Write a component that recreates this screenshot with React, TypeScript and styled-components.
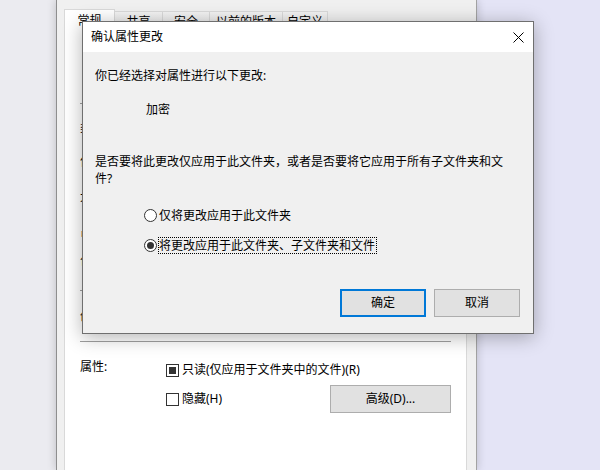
import React from "react";
import styled, { createGlobalStyle } from "styled-components";

const GlobalStyle = createGlobalStyle`
  html, body { margin: 0; padding: 0; }
  body {
    width: 600px;
    height: 470px;
    overflow: hidden;
    font-family: "Noto Sans", "Noto Sans CJK SC", sans-serif;
    font-size: 12px;
    color: #000;
  }
  * { box-sizing: border-box; }
`;

const Desktop = styled.div`
  position: relative;
  width: 600px;
  height: 470px;
  overflow: hidden;
  display: flex;
  background: #e4e4f6;
`;

const Backdrop = styled.div`
  width: 56px;
  flex: none;
  background: #ebebf0;
`;

const Window = styled.div`
  position: relative;
  width: 421px;
  flex: none;
  border-left: 1px solid #8e8e8e;
  border-right: 1px solid #a2a2a2;
  background: #f0f0f0;
  padding: 0 9px 0 7px;
  display: flex;
  flex-direction: column;
  box-shadow: 0 0 9px rgba(0, 0, 0, 0.2);
`;

const TabStrip = styled.div`
  display: flex;
  align-items: flex-end;
  height: 31px;
  flex: none;
`;

const Tab = styled.div<{ $w: number; $active?: boolean }>`
  width: ${(p) => p.$w}px;
  height: ${(p) => (p.$active ? 22 : 19)}px;
  margin-bottom: ${(p) => (p.$active ? 0 : 1)}px;
  border: 1px solid #d9d9d9;
  border-bottom: none;
  background: ${(p) => (p.$active ? "#fff" : "linear-gradient(#f3f3f3, #e6e6e6)")};
  position: relative;
  z-index: ${(p) => (p.$active ? 1 : 0)};
  display: flex;
  justify-content: center;
  align-items: center;
  padding-top: 1px;
  line-height: 18px;
  white-space: nowrap;
  & + & { margin-left: -1px; }
`;

const TabPage = styled.div`
  flex: 1;
  margin-top: -1px;
  background: #fff;
  border: 1px solid #d9d9d9;
  border-bottom: none;
  padding: 0 15px;
  display: flex;
  flex-direction: column;
`;

const TopArea = styled.div`
  height: 72px;
  flex: none;
  display: flex;
  align-items: center;
  gap: 22px;
  padding-left: 6px;
`;

const NameInput = styled.div`
  flex: 1;
  height: 23px;
  border: 1px solid #7a7a7a;
`;

const Separator = styled.div<{ $mt: number }>`
  height: 1px;
  flex: none;
  margin-top: ${(p) => p.$mt}px;
  background: #a0a0a0;
`;

const InfoRow = styled.div<{ $mt: number }>`
  display: flex;
  margin-top: ${(p) => p.$mt}px;
  line-height: 18px;
  height: 18px;
  white-space: nowrap;
`;

const InfoLabel = styled.div`
  width: 86px;
  flex: none;
`;

const AttrSection = styled.div`
  display: flex;
  margin-top: 16px;
`;

const AttrLabel = styled.div`
  width: 86px;
  flex: none;
  line-height: 18px;
`;

const AttrOptions = styled.div`
  flex: 1;
  display: flex;
  flex-direction: column;
  padding-top: 3px;
`;

const AttrRow = styled.div<{ $h: number; $mt?: number }>`
  display: flex;
  align-items: center;
  justify-content: space-between;
  height: ${(p) => p.$h}px;
  margin-top: ${(p) => p.$mt ?? 0}px;
`;

const CheckItem = styled.div`
  display: flex;
  align-items: center;
  gap: 3px;
  line-height: 18px;
  white-space: nowrap;
`;

const CheckBox = styled.span<{ $mixed?: boolean }>`
  width: 13px;
  height: 13px;
  flex: none;
  border: 1px solid #333;
  background: #fff;
  display: flex;
  align-items: center;
  justify-content: center;
  &::after {
    content: "";
    width: 7px;
    height: 7px;
    background: ${(p) => (p.$mixed ? "#333" : "transparent")};
  }
`;

const Button = styled.button<{ $w: number; $primary?: boolean }>`
  width: ${(p) => p.$w}px;
  height: 28px;
  flex: none;
  margin: 0;
  padding: 0;
  font-family: inherit;
  font-size: 12px;
  color: #000;
  background: #e1e1e1;
  border: ${(p) => (p.$primary ? "2px solid #0078d7" : "1px solid #adadad")};
  border-radius: 0;
  line-height: 18px;
`;

/* ---------- dialog ---------- */

const Dialog = styled.div`
  position: absolute;
  left: 82px;
  top: 21px;
  width: 452px;
  height: 313px;
  border: 1px solid #6f6f6f;
  background: #f0f0f0;
  box-shadow: 0 3px 18px rgba(0, 0, 0, 0.3);
  display: flex;
  flex-direction: column;
  z-index: 5;
`;

const TitleBar = styled.div`
  height: 30px;
  flex: none;
  background: #fff;
  display: flex;
  align-items: center;
  justify-content: space-between;
  padding-left: 8px;
  line-height: 18px;
`;

const CloseButton = styled.div`
  width: 30px;
  height: 30px;
  display: flex;
  align-items: center;
  justify-content: center;
`;

const DialogBody = styled.div`
  flex: 1;
  display: flex;
  flex-direction: column;
  padding: 15px 13px 16px 12px;
`;

const Line = styled.div<{ $mt?: number; $indent?: number; $lh?: number }>`
  margin-top: ${(p) => p.$mt ?? 0}px;
  margin-left: ${(p) => p.$indent ?? 0}px;
  line-height: ${(p) => p.$lh ?? 18}px;
  white-space: nowrap;
`;

const RadioGroup = styled.div`
  display: flex;
  flex-direction: column;
  gap: 12px;
  margin-top: 19px;
  margin-left: 49px;
`;

const RadioRow = styled.div`
  display: flex;
  align-items: center;
  height: 18px;
  gap: 1px;
`;

const RadioCircle = styled.span<{ $checked?: boolean }>`
  width: 13px;
  height: 13px;
  flex: none;
  border: 1px solid #333;
  border-radius: 50%;
  background: #fff;
  display: flex;
  align-items: center;
  justify-content: center;
  &::after {
    content: "";
    width: 7px;
    height: 7px;
    border-radius: 50%;
    background: ${(p) => (p.$checked ? "#333" : "transparent")};
  }
`;

const RadioLabel = styled.span<{ $focused?: boolean }>`
  border: 1px ${(p) => (p.$focused ? "dotted #000" : "solid transparent")};
  line-height: 15px;
  padding: 0 1px 0 0;
  white-space: nowrap;
`;

const ButtonRow = styled.div`
  margin-top: auto;
  display: flex;
  justify-content: flex-end;
  gap: 8px;
`;

const FolderIcon = () => (
  <svg width="32" height="28" viewBox="0 0 32 28">
    <path d="M1 3h11l3 3h16v20H1z" fill="#e8b84a" />
    <path d="M1 8h30v18H1z" fill="#f8d775" />
  </svg>
);

const CloseIcon = () => (
  <svg width="11" height="11" viewBox="0 0 11 11">
    <path d="M0.5 0.5L10.5 10.5M10.5 0.5L0.5 10.5" stroke="#000" strokeWidth="1" fill="none" />
  </svg>
);

const tabs = [
  { label: "常规", w: 51, active: true },
  { label: "共享", w: 49 },
  { label: "安全", w: 48 },
  { label: "以前的版本", w: 74 },
  { label: "自定义", w: 46 },
];

const infoRows: { label: string; mt: number; sepBefore?: number }[] = [
  { label: "类型:", mt: 15 },
  { label: "位置:", mt: 16 },
  { label: "大小:", mt: 17 },
  { label: "占用空间:", mt: 17 },
  { label: "包含:", mt: 12 },
];

export default function App() {
  return (
    <>
      <GlobalStyle />
      <Desktop>
        <Backdrop />
        <Window>
          <TabStrip>
            {tabs.map((t) => (
              <Tab key={t.label} $w={t.w} $active={t.active}>
                {t.label}
              </Tab>
            ))}
          </TabStrip>
          <TabPage>
            <TopArea>
              <FolderIcon />
              <NameInput />
            </TopArea>
            <Separator $mt={0} />
            {infoRows.map((r) => (
              <InfoRow key={r.label} $mt={r.mt}>
                <InfoLabel>{r.label}</InfoLabel>
              </InfoRow>
            ))}
            <Separator $mt={19} />
            <InfoRow $mt={17}>
              <InfoLabel>创建时间:</InfoLabel>
            </InfoRow>
            <Separator $mt={15} />
            <AttrSection>
              <AttrLabel>属性:</AttrLabel>
              <AttrOptions>
                <AttrRow $h={18}>
                  <CheckItem>
                    <CheckBox $mixed />
                    只读(仅应用于文件夹中的文件)(R)
                  </CheckItem>
                </AttrRow>
                <AttrRow $h={28} $mt={6}>
                  <CheckItem>
                    <CheckBox />
                    隐藏(H)
                  </CheckItem>
                  <Button $w={121}>高级(D)...</Button>
                </AttrRow>
              </AttrOptions>
            </AttrSection>
          </TabPage>
        </Window>

        <Dialog>
          <TitleBar>
            <span>确认属性更改</span>
            <CloseButton>
              <CloseIcon />
            </CloseButton>
          </TitleBar>
          <DialogBody>
            <Line>你已经选择对属性进行以下更改:</Line>
            <Line $mt={16} $indent={51}>
              加密
            </Line>
            <Line $mt={34} $lh={17}>
              是否要将此更改仅应用于此文件夹，或者是否要将它应用于所有子文件夹和文
              <br />
              件?
            </Line>
            <RadioGroup>
              <RadioRow>
                <RadioCircle />
                <RadioLabel>仅将更改应用于此文件夹</RadioLabel>
              </RadioRow>
              <RadioRow>
                <RadioCircle $checked />
                <RadioLabel $focused>将更改应用于此文件夹、子文件夹和文件</RadioLabel>
              </RadioRow>
            </RadioGroup>
            <ButtonRow>
              <Button $w={86} $primary>
                确定
              </Button>
              <Button $w={86}>取消</Button>
            </ButtonRow>
          </DialogBody>
        </Dialog>
      </Desktop>
    </>
  );
}
